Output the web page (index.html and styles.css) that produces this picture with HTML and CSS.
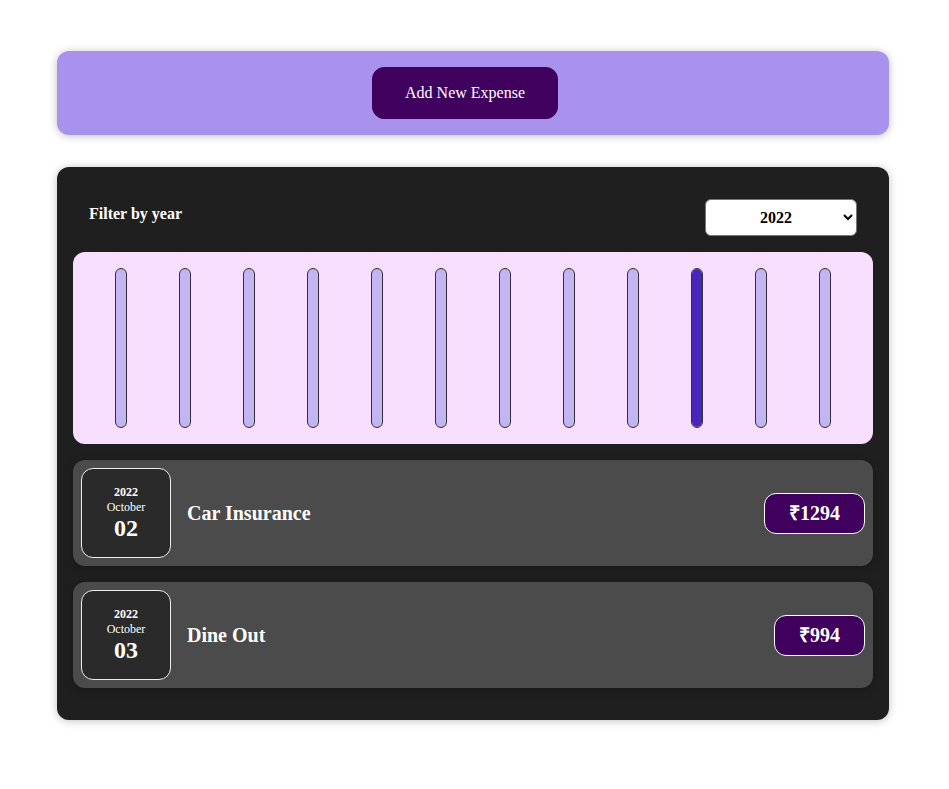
FILE: index.html
```html
<!DOCTYPE html>
<html lang="en">
<head>
<meta charset="utf-8">
<title>Expenses</title>
<link rel="stylesheet" href="styles.css">
</head>
<body>
<div class="app">
  <div class="card new-expense">
    <button class="new-expense__btn" type="button">Add New Expense</button>
  </div>
  <div class="card expenses">
    <div class="expenses-filter">
      <div class="expenses-filter__control">
        <label for="year">Filter by year</label>
        <select id="year">
          <option>2022</option>
          <option>2021</option>
          <option>2020</option>
          <option>2019</option>
        </select>
      </div>
    </div>
    <div class="chart">
      <div class="chart-bar"><div class="chart-bar__inner"><div class="chart-bar__fill" style="height:0%"></div></div></div>
      <div class="chart-bar"><div class="chart-bar__inner"><div class="chart-bar__fill" style="height:0%"></div></div></div>
      <div class="chart-bar"><div class="chart-bar__inner"><div class="chart-bar__fill" style="height:0%"></div></div></div>
      <div class="chart-bar"><div class="chart-bar__inner"><div class="chart-bar__fill" style="height:0%"></div></div></div>
      <div class="chart-bar"><div class="chart-bar__inner"><div class="chart-bar__fill" style="height:0%"></div></div></div>
      <div class="chart-bar"><div class="chart-bar__inner"><div class="chart-bar__fill" style="height:0%"></div></div></div>
      <div class="chart-bar"><div class="chart-bar__inner"><div class="chart-bar__fill" style="height:0%"></div></div></div>
      <div class="chart-bar"><div class="chart-bar__inner"><div class="chart-bar__fill" style="height:0%"></div></div></div>
      <div class="chart-bar"><div class="chart-bar__inner"><div class="chart-bar__fill" style="height:0%"></div></div></div>
      <div class="chart-bar"><div class="chart-bar__inner"><div class="chart-bar__fill" style="height:100%"></div></div></div>
      <div class="chart-bar"><div class="chart-bar__inner"><div class="chart-bar__fill" style="height:0%"></div></div></div>
      <div class="chart-bar"><div class="chart-bar__inner"><div class="chart-bar__fill" style="height:0%"></div></div></div>
    </div>
    <ul class="expenses-list">
      <li class="expense-item">
        <div class="expense-date">
          <div class="expense-date__year">2022</div>
          <div class="expense-date__month">October</div>
          <div class="expense-date__day">02</div>
        </div>
        <div class="expense-item__description">
          <h2>Car Insurance</h2>
          <div class="expense-item__price">₹1294</div>
        </div>
      </li>
      <li class="expense-item">
        <div class="expense-date">
          <div class="expense-date__year">2022</div>
          <div class="expense-date__month">October</div>
          <div class="expense-date__day">03</div>
        </div>
        <div class="expense-item__description">
          <h2>Dine Out</h2>
          <div class="expense-item__price">₹994</div>
        </div>
      </li>
    </ul>
  </div>
</div>
</body>
</html>
```
FILE: styles.css
```css
* { box-sizing: content-box; }
html { font-family: "Liberation Serif", "Times New Roman", serif; font-size: 16px; }
body { margin: 0; background: #ffffff; }
.app { padding: 51px 3px 1px 0; }
.card { border-radius: 12px; box-shadow: 0 1px 8px rgba(0,0,0,0.25); }
.new-expense {
  background-color: #a892ee;
  padding: 1rem;
  margin: 0 auto 2rem;
  width: 50rem;
  text-align: center;
}
.new-expense__btn {
  font: inherit;
  padding: 1rem 2rem;
  border: 1px solid #40005d;
  background-color: #40005d;
  color: #ffffff;
  border-radius: 12px;
  margin-right: 1rem;
  line-height: normal;
  cursor: pointer;
}
.expenses {
  padding: 1rem;
  background-color: #1f1f1f;
  margin: 2rem auto;
  width: 50rem;
}
.expenses-filter { color: #ffffff; padding: 0 1rem; }
.expenses-filter__control {
  display: flex;
  width: 100%;
  align-items: center;
  justify-content: space-between;
  margin: 1rem 0;
}
.expenses-filter label { font-weight: bold; margin-bottom: 0.5rem; }
.expenses-filter select {
  font: inherit;
  padding: 0.5rem 3rem 0.5rem 3.125rem;
  font-weight: bold;
  border-radius: 6px;
  background: #ffffff;
  color: #000000;
  border: 1px solid #767676;
}
.chart {
  padding: 1rem;
  border-radius: 12px;
  background-color: #f8dfff;
  display: flex;
  justify-content: space-around;
  height: 10rem;
}
.chart-bar { height: 100%; display: flex; flex-direction: column; align-items: center; }
.chart-bar__inner {
  height: 100%;
  width: 10px;
  border: 1px solid #313131;
  border-radius: 12px;
  background-color: #c3b4f3;
  overflow: hidden;
  display: flex;
  flex-direction: column;
  justify-content: flex-end;
}
.chart-bar__fill { background-color: #4826b9; width: 100%; }
.expenses-list { list-style: none; margin: 0; padding: 0; }
.expense-item {
  display: flex;
  justify-content: space-between;
  align-items: center;
  box-shadow: 0 2px 8px rgba(0,0,0,0.25);
  padding: 0.5rem;
  margin: 1rem 0;
  border-radius: 12px;
  background-color: #4b4b4b;
}
.expense-date {
  display: flex;
  flex-direction: column;
  width: 5.5rem;
  height: 5.5rem;
  border: 1px solid #ececec;
  background-color: #2a2a2a;
  color: #ffffff;
  border-radius: 12px;
  align-items: center;
  justify-content: center;
}
.expense-date__year { font-size: 0.75rem; font-weight: bold; }
.expense-date__month { font-size: 0.75rem; }
.expense-date__day { font-size: 1.5rem; font-weight: bold; }
.expense-item__description {
  display: flex;
  flex-direction: row;
  align-items: center;
  justify-content: flex-start;
  flex: 1;
}
.expense-item__description h2 {
  font-size: 1.25rem;
  flex: 1;
  margin: 0 1rem;
  color: #ffffff;
}
.expense-item__price {
  font-size: 1.25rem;
  line-height: 23px;
  font-weight: bold;
  color: #ffffff;
  background-color: #40005d;
  border: 1px solid #ffffff;
  padding: 0.5rem 1.5rem;
  border-radius: 12px;
}
```
